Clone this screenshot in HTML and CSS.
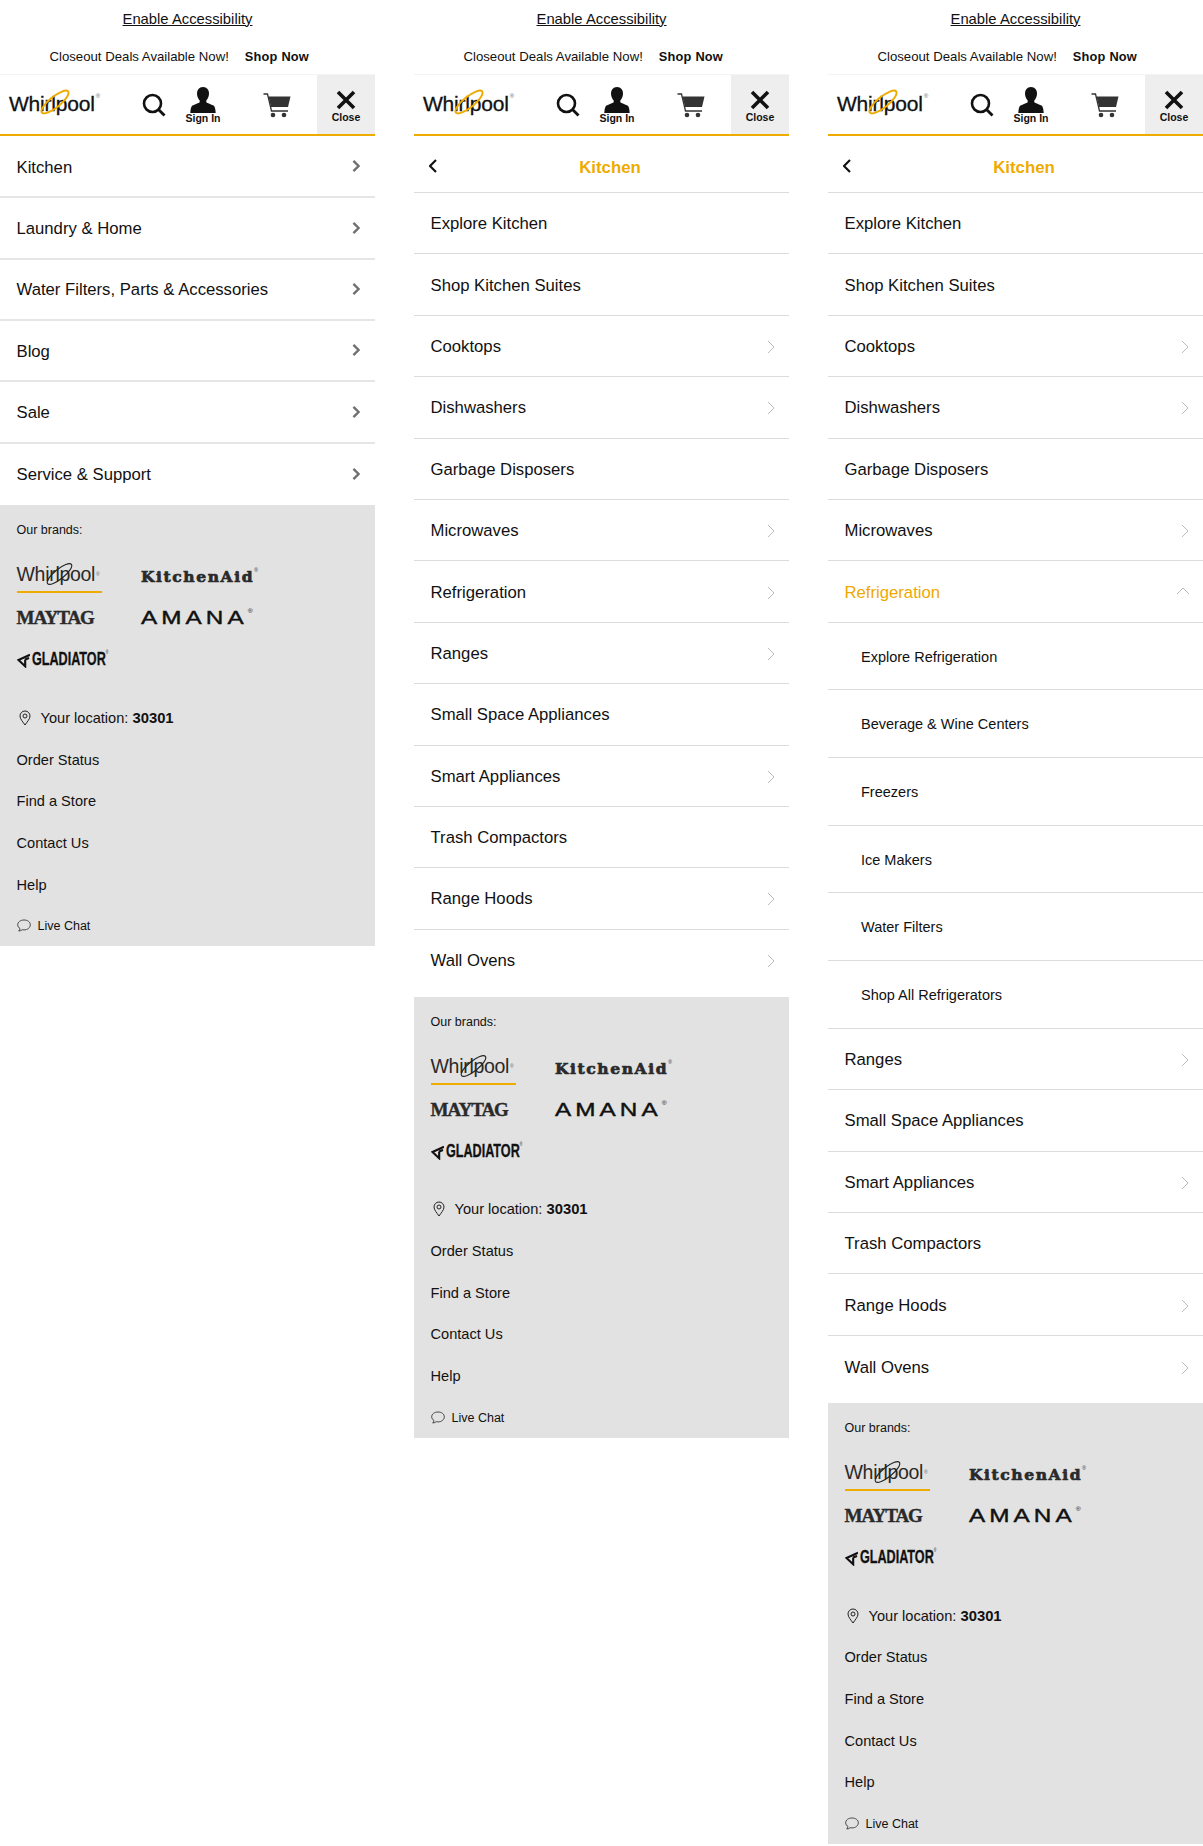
FILE: index.html
```html
<!DOCTYPE html>
<html lang="en">
<head>
<meta charset="utf-8">
<title>Whirlpool mobile navigation</title>
<link rel="stylesheet" href="styles.css">
</head>
<body>
<svg class="sprite" xmlns="http://www.w3.org/2000/svg">
  <symbol id="i-search" viewBox="0 0 24 24"><circle cx="10.5" cy="10.5" r="8.5" fill="none" stroke="currentColor" stroke-width="2.6"/><path d="M16.5 16.5L22.5 22.5" stroke="currentColor" stroke-width="2.8"/></symbol>
  <symbol id="i-user" viewBox="0 0 26 26"><path d="M13 0c4 0 6 3 6 6.5 0 3-1.300 5.500-2.700 7v1.700c1 1.100 5 2 7.200 3.300 1.500.9 2 4 2.200 7.500H.3c.2-3.500.7-6.600 2.200-7.500 2.200-1.300 6.200-2.200 7.200-3.300v-1.700C8.300 12 7 9.500 7 6.500 7 3 9 0 13 0z" fill="currentColor"/></symbol>
  <symbol id="i-cart" viewBox="0 0 28 25"><path d="M0.500 1H4.500L8.500 18H25" fill="none" stroke="#333" stroke-width="1.300"/><path d="M5.500 3.500H27.500L25 14H8z" fill="#333"/><circle cx="10" cy="22" r="2.300" fill="#333"/><circle cx="21" cy="22" r="2.300" fill="#333"/></symbol>
  <symbol id="i-close" viewBox="0 0 20 20"><path d="M2 2L18 18M18 2L2 18" stroke="currentColor" stroke-width="3.600"/></symbol>
  <symbol id="i-right" viewBox="0 0 8 14"><path d="M1 1L7 7L1 13" fill="none" stroke="currentColor" stroke-width="inherit"/></symbol>
  <symbol id="i-up" viewBox="0 0 14 8"><path d="M1 7L7 1L13 7" fill="none" stroke="currentColor"/></symbol>
  <symbol id="i-back" viewBox="0 0 8 14"><path d="M7 1L1 7L7 13" fill="none" stroke="currentColor" stroke-width="2.200"/></symbol>
  <symbol id="i-pin" viewBox="0 0 12 16"><path d="M6 15C4 12 1 9 1 6a5 5 0 0 1 10 0c0 3-3 6-5 9z" fill="none" stroke="currentColor"/><circle cx="6" cy="6" r="2" fill="none" stroke="currentColor"/></symbol>
  <symbol id="i-chat" viewBox="0 0 14 13"><path d="M7 1C3.500 1 .7 3 .7 5.800c0 1.600 1 2.900 2.300 3.800-.1 1-.6 1.800-1.300 2.400 1.500 0 2.700-.6 3.500-1.300.6.100 1.200.2 1.800.2 3.500 0 6.300-2.200 6.300-5.100S10.500 1 7 1z" fill="none" stroke="currentColor" stroke-width=".8"/></symbol>
  <symbol id="i-glad" viewBox="0 0 14 15"><path d="M13.500 1.500L1.500 7 8.500 13.500V6.500M8.500 6.500L12.500 5" fill="none" stroke="currentColor" stroke-width="2.200"/></symbol>
  <symbol id="i-swoosh" viewBox="0 0 36 30"><ellipse cx="18" cy="15" rx="19" ry="6" transform="rotate(-39 18 15)" fill="none" stroke="currentColor"/></symbol>
</svg>

<main class="page">

  <section class="phone">
    <p class="a11y"><a href="#">Enable Accessibility</a></p>
    <p class="promo">Closeout Deals Available Now!<b>Shop Now</b></p>
    <header class="head">
      <div class="logo"><span class="mark">Whirlpool<sup>®</sup><svg class="swoosh"><use href="#i-swoosh"/></svg></span></div>
      <svg class="ic-search"><use href="#i-search"/></svg>
      <div class="signin"><svg class="ic-user"><use href="#i-user"/></svg><span>Sign In</span></div>
      <svg class="ic-cart"><use href="#i-cart"/></svg>
      <div class="close"><svg class="ic-close"><use href="#i-close"/></svg><span>Close</span></div>
    </header>
    <nav class="menu main">
      <a class="row">Kitchen<svg class="chev"><use href="#i-right"/></svg></a>
      <a class="row">Laundry &amp; Home<svg class="chev"><use href="#i-right"/></svg></a>
      <a class="row">Water Filters, Parts &amp; Accessories<svg class="chev"><use href="#i-right"/></svg></a>
      <a class="row">Blog<svg class="chev"><use href="#i-right"/></svg></a>
      <a class="row">Sale<svg class="chev"><use href="#i-right"/></svg></a>
      <a class="row last">Service &amp; Support<svg class="chev"><use href="#i-right"/></svg></a>
    </nav>
    <aside class="panel">
      <p class="brands-label">Our brands:</p>
      <div class="brands">
        <div class="brand"><span class="b-whirl">Whirlpool<sup>®</sup><svg class="swoosh"><use href="#i-swoosh"/></svg></span></div>
        <div class="brand"><span class="b-ka">KitchenAid<sup>®</sup></span></div>
        <div class="brand"><span class="b-may">MAYTAG</span></div>
        <div class="brand"><span class="b-ama">AMANA<sup>®</sup></span></div>
        <div class="brand"><svg class="ic-glad"><use href="#i-glad"/></svg><span class="b-gla">GLADIATOR<sup>®</sup></span></div>
      </div>
      <p class="link loc"><svg class="ic-pin"><use href="#i-pin"/></svg>Your location: <b>30301</b></p>
      <p class="link">Order Status</p>
      <p class="link">Find a Store</p>
      <p class="link">Contact Us</p>
      <p class="link">Help</p>
      <p class="chat"><svg class="ic-chat"><use href="#i-chat"/></svg>Live Chat</p>
    </aside>
  </section>

  <section class="phone">
    <p class="a11y"><a href="#">Enable Accessibility</a></p>
    <p class="promo">Closeout Deals Available Now!<b>Shop Now</b></p>
    <header class="head">
      <div class="logo"><span class="mark">Whirlpool<sup>®</sup><svg class="swoosh"><use href="#i-swoosh"/></svg></span></div>
      <svg class="ic-search"><use href="#i-search"/></svg>
      <div class="signin"><svg class="ic-user"><use href="#i-user"/></svg><span>Sign In</span></div>
      <svg class="ic-cart"><use href="#i-cart"/></svg>
      <div class="close"><svg class="ic-close"><use href="#i-close"/></svg><span>Close</span></div>
    </header>
    <div class="sub-head"><svg class="ic-back"><use href="#i-back"/></svg><span>Kitchen</span></div>
    <nav class="menu sub">
      <a class="row">Explore Kitchen</a>
      <a class="row">Shop Kitchen Suites</a>
      <a class="row">Cooktops<svg class="chev"><use href="#i-right"/></svg></a>
      <a class="row">Dishwashers<svg class="chev"><use href="#i-right"/></svg></a>
      <a class="row">Garbage Disposers</a>
      <a class="row">Microwaves<svg class="chev"><use href="#i-right"/></svg></a>
      <a class="row">Refrigeration<svg class="chev"><use href="#i-right"/></svg></a>
      <a class="row">Ranges<svg class="chev"><use href="#i-right"/></svg></a>
      <a class="row">Small Space Appliances</a>
      <a class="row">Smart Appliances<svg class="chev"><use href="#i-right"/></svg></a>
      <a class="row">Trash Compactors</a>
      <a class="row">Range Hoods<svg class="chev"><use href="#i-right"/></svg></a>
      <a class="row last">Wall Ovens<svg class="chev"><use href="#i-right"/></svg></a>
    </nav>
    <aside class="panel">
      <p class="brands-label">Our brands:</p>
      <div class="brands">
        <div class="brand"><span class="b-whirl">Whirlpool<sup>®</sup><svg class="swoosh"><use href="#i-swoosh"/></svg></span></div>
        <div class="brand"><span class="b-ka">KitchenAid<sup>®</sup></span></div>
        <div class="brand"><span class="b-may">MAYTAG</span></div>
        <div class="brand"><span class="b-ama">AMANA<sup>®</sup></span></div>
        <div class="brand"><svg class="ic-glad"><use href="#i-glad"/></svg><span class="b-gla">GLADIATOR<sup>®</sup></span></div>
      </div>
      <p class="link loc"><svg class="ic-pin"><use href="#i-pin"/></svg>Your location: <b>30301</b></p>
      <p class="link">Order Status</p>
      <p class="link">Find a Store</p>
      <p class="link">Contact Us</p>
      <p class="link">Help</p>
      <p class="chat"><svg class="ic-chat"><use href="#i-chat"/></svg>Live Chat</p>
    </aside>
  </section>

  <section class="phone">
    <p class="a11y"><a href="#">Enable Accessibility</a></p>
    <p class="promo">Closeout Deals Available Now!<b>Shop Now</b></p>
    <header class="head">
      <div class="logo"><span class="mark">Whirlpool<sup>®</sup><svg class="swoosh"><use href="#i-swoosh"/></svg></span></div>
      <svg class="ic-search"><use href="#i-search"/></svg>
      <div class="signin"><svg class="ic-user"><use href="#i-user"/></svg><span>Sign In</span></div>
      <svg class="ic-cart"><use href="#i-cart"/></svg>
      <div class="close"><svg class="ic-close"><use href="#i-close"/></svg><span>Close</span></div>
    </header>
    <div class="sub-head"><svg class="ic-back"><use href="#i-back"/></svg><span>Kitchen</span></div>
    <nav class="menu sub">
      <a class="row">Explore Kitchen</a>
      <a class="row">Shop Kitchen Suites</a>
      <a class="row">Cooktops<svg class="chev"><use href="#i-right"/></svg></a>
      <a class="row">Dishwashers<svg class="chev"><use href="#i-right"/></svg></a>
      <a class="row">Garbage Disposers</a>
      <a class="row">Microwaves<svg class="chev"><use href="#i-right"/></svg></a>
      <a class="row open">Refrigeration<svg class="chev-up"><use href="#i-up"/></svg></a>
      <a class="row child">Explore Refrigeration</a>
      <a class="row child">Beverage &amp; Wine Centers</a>
      <a class="row child">Freezers</a>
      <a class="row child">Ice Makers</a>
      <a class="row child">Water Filters</a>
      <a class="row child">Shop All Refrigerators</a>
      <a class="row">Ranges<svg class="chev"><use href="#i-right"/></svg></a>
      <a class="row">Small Space Appliances</a>
      <a class="row">Smart Appliances<svg class="chev"><use href="#i-right"/></svg></a>
      <a class="row">Trash Compactors</a>
      <a class="row">Range Hoods<svg class="chev"><use href="#i-right"/></svg></a>
      <a class="row last">Wall Ovens<svg class="chev"><use href="#i-right"/></svg></a>
    </nav>
    <aside class="panel">
      <p class="brands-label">Our brands:</p>
      <div class="brands">
        <div class="brand"><span class="b-whirl">Whirlpool<sup>®</sup><svg class="swoosh"><use href="#i-swoosh"/></svg></span></div>
        <div class="brand"><span class="b-ka">KitchenAid<sup>®</sup></span></div>
        <div class="brand"><span class="b-may">MAYTAG</span></div>
        <div class="brand"><span class="b-ama">AMANA<sup>®</sup></span></div>
        <div class="brand"><svg class="ic-glad"><use href="#i-glad"/></svg><span class="b-gla">GLADIATOR<sup>®</sup></span></div>
      </div>
      <p class="link loc"><svg class="ic-pin"><use href="#i-pin"/></svg>Your location: <b>30301</b></p>
      <p class="link">Order Status</p>
      <p class="link">Find a Store</p>
      <p class="link">Contact Us</p>
      <p class="link">Help</p>
      <p class="chat"><svg class="ic-chat"><use href="#i-chat"/></svg>Live Chat</p>
    </aside>
  </section>

</main>
</body>
</html>
```
FILE: styles.css
```css
* { box-sizing: border-box; }
html, body { margin: 0; padding: 0; background: #fff; }
body { font-family: "Liberation Sans", Arial, sans-serif; color: #111; height: 1846px; overflow: hidden; }
p { margin: 0; }
a { color: inherit; text-decoration: none; }
.sprite { display: none; }

.page { display: flex; gap: 39px; align-items: flex-start; }
.phone { width: 375px; flex: none; }

.a11y { height: 37px; display: flex; align-items: center; justify-content: center; font-size: 14.8px; }
.a11y a { text-decoration: underline; }
.promo { height: 38px; display: flex; align-items: center; justify-content: center; gap: 16px; font-size: 13.2px; padding-right: 16.5px; }
.promo b { font-size: 12.8px; letter-spacing: .2px; }

.head { height: 61px; display: flex; align-items: stretch; box-shadow: 0 -1px 0 #f4f4f4; border-bottom: 2px solid #eeab00; position: relative; }
.logo { width: 142px; padding-left: 9px; display: flex; align-items: center; }
.mark { position: relative; font-size: 21px; letter-spacing: -.2px; line-height: 1; color: #111; padding-bottom: 3px; -webkit-text-stroke: .3px #111; }
.mark sup, .b-whirl sup { font-size: 6px; vertical-align: top; position: relative; top: 0; left: 1px; color: #666; -webkit-text-stroke: 0; }
.swoosh { position: absolute; left: 30px; top: -5px; width: 32px; height: 28px; color: #eeab00; overflow: visible; stroke-width: 2.2; }
.ic-search { width: 24px; height: 24px; margin-top: 18px; color: #111; }
.signin { width: 36px; margin-left: 19px; display: flex; flex-direction: column; align-items: center; font-size: 10.5px; font-weight: bold; line-height: 11px; padding-top: 11.5px; }
.ic-user { width: 26px; height: 26px; color: #111; }
.ic-cart { width: 28px; height: 25px; margin: 18px 0 0 42px; }
.close { margin-left: auto; width: 58px; background: #eee; display: flex; flex-direction: column; align-items: center; font-size: 10.5px; font-weight: bold; line-height: 11px; padding-top: 15px; }
.ic-close { width: 20px; height: 20px; margin-bottom: 2px; color: #111; }

.sub-head { height: 57px; display: flex; align-items: center; padding: 4px 0 0 15px; border-bottom: 1px solid #dcdcdc; }
.sub-head span { flex: 1; text-align: center; font-size: 16.8px; font-weight: bold; color: #eeab00; padding: 4px 6px 0 0; }
.ic-back { width: 8px; height: 14px; color: #111; }

.menu.main { padding-top: 1.2px; }
.menu.sub { padding-bottom: 5.5px; }
.row { height: 61.4px; display: flex; align-items: center; justify-content: space-between; padding: 2px 14px 0 16.5px; font-size: 16.7px; border-bottom: 1px solid #dcdcdc; }
.row.last { border-bottom: 0; }
.main .row { height: 61.3px; padding: 2px 15px 0 16.5px; border-bottom-width: 2px; border-bottom-color: #e6e6e6; }
.main .row.last { border-bottom: 0; }
.chev { width: 8px; height: 14px; fill: none; color: #bbb; stroke-width: 1; }
.main .chev { width: 8px; height: 12px; margin-top: -3px; color: #707070; stroke-width: 2.8; }
.chev-up { width: 14px; height: 8px; color: #bbb; margin-right: -1px; margin-top: -4px; }
.row.open { color: #f0a800; }
.row.child { height: 67.7px; padding: 1px 14px 0 33px; font-size: 14.5px; }

.panel { background: #e2e2e2; height: 441px; padding: 0 16.5px; }
.brands-label { height: 51px; display: flex; align-items: center; font-size: 12.5px; }
.brands { display: grid; grid-template-columns: 124.5px 1fr; grid-auto-rows: 42px; height: 126px; margin-bottom: 15px; }
.brand { display: flex; align-items: center; color: #2a2a2a; }
.brand sup { font-size: 5px; vertical-align: top; letter-spacing: 0; font-weight: normal; font-family: "Liberation Sans", sans-serif; -webkit-text-stroke: 0; }
.b-whirl { position: relative; font-size: 19.5px; letter-spacing: -.3px; line-height: 22px; padding-bottom: 6px; padding-right: 3px; border-bottom: 2px solid #eeab00; margin-top: 3px; }
.b-whirl .swoosh { left: 28px; top: -2px; width: 29px; height: 26px; color: #222; stroke-width: 1.4; }
.b-ka { font-family: "DejaVu Serif", serif; font-weight: bold; font-size: 15.5px; letter-spacing: 1.6px; -webkit-text-stroke: .7px #2a2a2a; }
.b-may { font-family: "Liberation Serif", serif; font-weight: bold; font-size: 19px; letter-spacing: -1px; -webkit-text-stroke: .4px #2a2a2a; padding-bottom: 1px; }
.b-ama { display: inline-block; font-size: 18px; letter-spacing: 3px; color: #111; -webkit-text-stroke: .4px #111; transform: scaleX(1.35); transform-origin: left center; }
.b-gla { display: inline-block; font-weight: bold; font-size: 18px; color: #111; -webkit-text-stroke: .3px #111; transform: scaleX(.7); transform-origin: left center; white-space: nowrap; padding-bottom: 2px; }
.ic-glad { width: 15px; height: 16px; margin-right: 2px; color: #111; padding-bottom: 1px; }

.link { height: 41.7px; display: flex; align-items: center; font-size: 14.6px; white-space: pre; }
.link b { font-weight: bold; font-size: 14.8px; }
.ic-pin { width: 12px; height: 16px; margin: 0 10px 0 2px; color: #222; }
.chat { height: 41px; display: flex; align-items: center; font-size: 12.5px; }
.ic-chat { width: 14px; height: 13px; margin-right: 7px; color: #222; }
```
